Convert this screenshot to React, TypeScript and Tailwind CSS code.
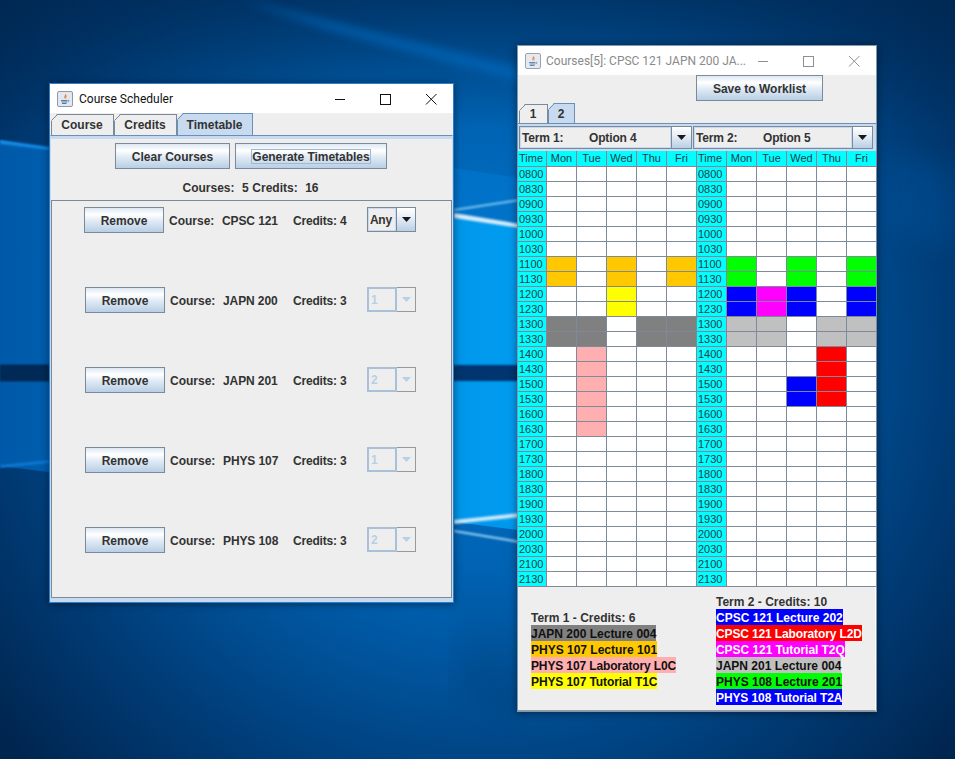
import React from "react";

const BTN =
  "flex items-center justify-center border border-[#7a8a99] bg-[linear-gradient(180deg,#dde8f3_0%,#ffffff_28%,#e4edf6_50%,#b8cfe5_100%)] pt-[1px] font-bold text-[12px] text-[#333]";

function Wallpaper() {
  return (
    <svg className="absolute inset-0" width="955" height="759" viewBox="0 0 955 759">
      <defs>
        <radialGradient id="base" gradientUnits="userSpaceOnUse" cx="480" cy="340" r="620">
          <stop offset="0" stopColor="#0078d0" />
          <stop offset="0.45" stopColor="#005dab" />
          <stop offset="0.75" stopColor="#003d78" />
          <stop offset="1" stopColor="#00254f" />
        </radialGradient>
        <linearGradient id="pane" gradientUnits="userSpaceOnUse" x1="0" y1="0" x2="520" y2="0">
          <stop offset="0" stopColor="#0059a8" />
          <stop offset="0.5" stopColor="#0070c4" />
          <stop offset="0.9" stopColor="#0098ec" />
          <stop offset="1" stopColor="#009cf0" />
        </linearGradient>
        <linearGradient id="low" gradientUnits="userSpaceOnUse" x1="0" y1="520" x2="0" y2="759">
          <stop offset="0" stopColor="#0070c8" />
          <stop offset="1" stopColor="#003264" />
        </linearGradient>
        <linearGradient id="top" gradientUnits="userSpaceOnUse" x1="0" y1="0" x2="0" y2="130">
          <stop offset="0" stopColor="#00264f" stopOpacity="0.6" />
          <stop offset="1" stopColor="#00264f" stopOpacity="0" />
        </linearGradient>
        <filter id="b1"><feGaussianBlur stdDeviation="0.8" /></filter>
        <filter id="b2"><feGaussianBlur stdDeviation="14" /></filter>
        <filter id="b3"><feGaussianBlur stdDeviation="5" /></filter>
      </defs>
      <rect width="955" height="759" fill="url(#base)" />
      <rect width="955" height="130" fill="url(#top)" />
      <polygon points="240,0 520,68 520,82 330,30" fill="#0068bc" opacity="0.75" filter="url(#b3)" />
      <polygon points="200,130 520,178 520,226 200,173" fill="#0078d0" opacity="0.6" />
      <polygon points="0,140 520,226 600,540 0,466" fill="url(#pane)" />
      <polygon points="455,540 520,545 520,720 455,690" fill="url(#low)" opacity="0.6" filter="url(#b2)" />
      <rect x="0" y="365" width="530" height="16" fill="#00366f" filter="url(#b1)" />
      <rect x="0" y="365" width="60" height="16" fill="#002a55" filter="url(#b1)" />
      <polygon points="454,213 520,224 520,228 454,218" fill="#d6ecfa" filter="url(#b1)" />
      <polygon points="454,209 520,199 520,201 454,211" fill="#7cc8f2" filter="url(#b1)" />
      <polygon points="454,520 520,513 520,517 454,524" fill="#cdeafa" filter="url(#b1)" />
      <polygon points="454,530 520,541 520,543 454,532" fill="#9fd6f6" filter="url(#b1)" />
      <polygon points="0,140 50,147 50,150 0,144" fill="#1388e4" filter="url(#b1)" />
      <polygon points="0,465 50,460 50,463 0,468" fill="#0b78d2" filter="url(#b1)" />
      <polygon points="877,150 955,170 955,250 877,230" fill="#004f96" opacity="0.5" filter="url(#b2)" />
    </svg>
  );
}

function JavaIcon({ faded }: { faded?: boolean }) {
  return (
    <svg width="16" height="16" viewBox="0 0 16 16" className={faded ? "shrink-0 opacity-90" : "shrink-0"}>
      <rect x="0.5" y="0.5" width="15" height="15" rx="1.5" fill="#e4e8ee" stroke="#8d99a8" />
      <path d="M8.5 2c1 1.5-2 3-1 5 .3.6.6 1 .9 1.3C7.200 6.500 10.500 5.500 8.500 2z" fill="#e8782a" />
      <path d="M10 4.500c-1 .8-1.600 1.500-1 3.200" stroke="#e8782a" strokeWidth="0.8" fill="none" />
      <path d="M4 9.500h6.500M4.500 11h5.500M5 12.500h4.500" stroke="#3f6fa8" strokeWidth="0.9" fill="none" />
      <path d="M11 9.300c1.500-.3 1.500 1.400-.5 1.500" stroke="#3f6fa8" strokeWidth="0.7" fill="none" />
    </svg>
  );
}

function Controls({ color, width }: { color: string; width: number }) {
  return (
    <svg width={width} height="12" viewBox={`0 0 ${width} 12`} className="shrink-0" shapeRendering="crispEdges">
      <rect x="0" y="6" width="10" height="1" fill={color} />
      <rect x="45.500" y="1.500" width="10" height="10" fill="none" stroke={color} />
      <path d="M91 1L101.500 11.500M101.500 1L91 11.500" stroke={color} strokeWidth="1" shapeRendering="auto" fill="none" />
    </svg>
  );
}

function Arrow({ disabled }: { disabled?: boolean }) {
  return (
    <svg width="9" height="5" viewBox="0 0 9 5">
      <polygon points="0,0 9,0 4.500,5" fill={disabled ? "#b8cfe5" : "#1a1a1a"} />
    </svg>
  );
}

function Tab({ label, cls, selected }: { label: string; cls: string; selected?: boolean }) {
  const color = selected ? "#6c8fb8" : "#7a8a99";
  return (
    <div
      className={`${cls} relative flex items-center justify-center border-t border-r [clip-path:polygon(6px_0,100%_0,100%_100%,0_100%,0_6px)] ${
        selected ? "border-[#6c8fb8] bg-[#c8daef]" : "border-[#7a8a99]"
      }`}
    >
      <svg className="absolute left-0 top-[-1px]" width="7" height="7" viewBox="0 0 7 7">
        <path d="M0.500 6.500L6.500 0.500" stroke={color} strokeWidth="1" fill="none" />
      </svg>
      <div className="absolute bottom-0 left-0 top-[6px] w-[1px]" style={{ background: color }} />
      {label}
    </div>
  );
}

function SmallCombo({ value, disabled }: { value: string; disabled?: boolean }) {
  return (
    <div className="flex h-[25px] w-[49px]">
      <div
        className={
          disabled
            ? "flex w-[30px] items-center border-2 border-[#a9c0d8] bg-[#eeeeee] pl-[2px] pt-[1px] text-[12px] font-bold text-[#b8cfe5]"
            : "flex w-[30px] items-center border border-[#7a8a99] bg-[#eeeeee] pl-[2px] pt-[1px] text-[12px] font-bold text-[#333] tracking-[-0.3px] shadow-[inset_0_0_0_1px_#c8daef]"
        }
      >
        {value}
      </div>
      <div
        className={
          disabled
            ? "flex w-[19px] items-center justify-center border border-l-0 border-[#999999] bg-[#eeeeee]"
            : "flex w-[19px] items-center justify-center border border-l-0 border-[#7a8a99] bg-[linear-gradient(180deg,#ffffff_0%,#e4edf6_45%,#b8cfe5_100%)]"
        }
      >
        <Arrow disabled={disabled} />
      </div>
    </div>
  );
}

const ROWS = [
  { name: "CPSC 121", cr: 4, combo: "Any", on: true, ml: "ml-[32px]", nw: "w-[71px]" },
  { name: "JAPN 200", cr: 3, combo: "1", on: false, ml: "ml-[33px]", nw: "w-[70px]" },
  { name: "JAPN 201", cr: 3, combo: "2", on: false, ml: "ml-[33px]", nw: "w-[70px]" },
  { name: "PHYS 107", cr: 3, combo: "1", on: false, ml: "ml-[33px]", nw: "w-[70px]" },
  { name: "PHYS 108", cr: 3, combo: "2", on: false, ml: "ml-[33px]", nw: "w-[70px]" },
];

function SchedulerWindow() {
  return (
    <div className="absolute left-[49px] top-[83px] flex h-[520px] w-[405px] flex-col border border-[#2a7fcb] bg-[#eeeeee] shadow-[0_1px_8px_rgba(0,0,0,0.45)]">
      <div className="flex h-[29px] shrink-0 items-center bg-white pl-[7px] pr-[16px] text-[12px] text-[#111] font-['Roboto',sans-serif]">
        <JavaIcon />
        <span className="ml-[6px]">Course Scheduler</span>
        <div className="ml-auto">
          <Controls color="#111" width={102} />
        </div>
      </div>
      <div className="flex h-[22px] shrink-0 items-end pl-[1px] text-[12px] font-bold text-[#333]">
        <Tab label="Course" cls="h-[21px] w-[63px]" />
        <Tab label="Credits" cls="h-[21px] w-[63px]" />
        <Tab label="Timetable" cls="h-[22px] w-[76px]" selected />
      </div>
      <div className="flex min-h-0 flex-1 flex-col border-t border-[#6c8fb8] border-x border-x-[#c8daef] border-b-[4px] border-b-[#c8daef]">
        <div className="flex min-h-0 flex-1 flex-col border-t-[3px] border-[#c8daef]">
          <div className="mt-[4px] flex shrink-0 justify-center gap-[5px] pr-[1px]">
            <div className={`${BTN} h-[26px] w-[115px]`}>Clear Courses</div>
            <div className={`${BTN} h-[26px] w-[152px]`}>
              <span className="flex h-[15px] items-center border border-[#a3b8cc] tracking-[-0.03px]">Generate Timetables</span>
            </div>
          </div>
          <div className="flex h-[31px] shrink-0 items-center justify-center whitespace-pre pr-[2px] pt-[6px] text-[12px] font-bold text-[#333] [word-spacing:0.4px]">
            Courses:{"  "}5 Credits:{"  "}16
          </div>
          <div className="min-h-0 flex-1 border border-[#7a8a99]">
            {ROWS.map((r) => (
              <div key={r.name} className="flex h-[80px] items-start pt-[6px] text-[12px] font-bold text-[#333]">
                <div className={`${BTN} ${r.ml} h-[26px] w-[80px] shrink-0`}>Remove</div>
                <div className="ml-[5px] flex h-[26px] w-[53px] shrink-0 items-center pt-[1px]">Course:</div>
                <div className={`${r.nw} flex h-[26px] shrink-0 items-center pt-[1px] tracking-[-0.1px]`}>{r.name}</div>
                <div className="flex h-[26px] w-[74px] shrink-0 items-center pt-[1px] tracking-[-0.2px]">Credits: {r.cr}</div>
                <SmallCombo value={r.combo} disabled={!r.on} />
              </div>
            ))}
          </div>
        </div>
      </div>
    </div>
  );
}

function TermCombo({ term, option, fieldW, optW }: { term: string; option: string; fieldW: string; optW: string }) {
  return (
    <div className="flex h-[23px] shrink-0">
      <div className={`${fieldW} flex items-center whitespace-pre border border-[#7a8a99] bg-[#eeeeee] pl-[2px] text-[12px] font-bold text-[#333] tracking-[-0.15px] shadow-[inset_0_0_0_1px_#c8daef]`}>
        <span className={optW}>{term}</span>
        <span>{option}</span>
      </div>
      <div className="flex w-[20px] items-center justify-center border border-l-0 border-[#7a8a99] bg-[linear-gradient(180deg,#ffffff_0%,#e4edf6_45%,#b8cfe5_100%)]">
        <Arrow />
      </div>
    </div>
  );
}

const TIMES = [
  "0800","0830","0900","0930","1000","1030","1100","1130","1200","1230","1300","1330","1400","1430",
  "1500","1530","1600","1630","1700","1730","1800","1830","1900","1930","2000","2030","2100","2130",
];
const DAYS = ["Mon", "Tue", "Wed", "Thu", "Fri"];

const O = "bg-[#ffc800]";
const Y = "bg-[#ffff00]";
const G = "bg-[#808080]";
const P = "bg-[#ffafaf]";
const L = "bg-[#00ff00]";
const B = "bg-[#0000ff]";
const M = "bg-[#ff00ff]";
const S = "bg-[#c0c0c0]";
const R = "bg-[#ff0000]";

function term1(t: string, d: number): string {
  if ((t === "1100" || t === "1130") && (d === 0 || d === 2 || d === 4)) return O;
  if ((t === "1200" || t === "1230") && d === 2) return Y;
  if ((t === "1300" || t === "1330") && d !== 2) return G;
  if (d === 1 && t >= "1400" && t <= "1630") return P;
  return "bg-white";
}
function term2(t: string, d: number): string {
  if ((t === "1100" || t === "1130") && (d === 0 || d === 2 || d === 4)) return L;
  if ((t === "1200" || t === "1230") && (d === 0 || d === 2 || d === 4)) return B;
  if ((t === "1200" || t === "1230") && d === 1) return M;
  if ((t === "1300" || t === "1330") && d !== 2) return S;
  if (d === 3 && t >= "1400" && t <= "1530") return R;
  if (d === 2 && (t === "1500" || t === "1530")) return B;
  return "bg-white";
}

const CY = "overflow-hidden border-b border-r border-[#937f95] bg-[#00ffff] text-[11px] leading-[15px] text-[#2a3a4a]";
const CELL = "h-[15px] border-b border-r border-[#7d8a99]";

function Timetable() {
  const heads = ["Time", ...DAYS, "Time", ...DAYS];
  return (
    <div className="grid h-[436px] w-[359px] shrink-0 grid-cols-[29px_repeat(11,30px)] grid-rows-[16px_repeat(28,15px)]">
      {heads.map((h, i) => (
        <div key={i} className={`${CY} h-[16px] ${h === "Time" ? "pl-[1px]" : "text-center"}`}>
          {h}
        </div>
      ))}
      {TIMES.map((t) => (
        <React.Fragment key={t}>
          <div className={`${CY} h-[15px] pl-[1px]`}>{t}</div>
          {DAYS.map((d, i) => (
            <div key={d} className={`${CELL} ${term1(t, i)}`} />
          ))}
          <div className={`${CY} h-[15px] pl-[1px]`}>{t}</div>
          {DAYS.map((d, i) => (
            <div key={d} className={`${CELL} ${term2(t, i)}`} />
          ))}
        </React.Fragment>
      ))}
    </div>
  );
}

function LegendLine({ text, cls }: { text: string; cls: string }) {
  return <div className={`${cls} h-[16px] w-fit whitespace-nowrap text-[12px] font-bold leading-[18px]`}>{text}</div>;
}

function CoursesWindow() {
  return (
    <div className="absolute left-[517px] top-[45px] flex h-[667px] w-[360px] flex-col border border-[#7f98b0] bg-[#eeeeee] shadow-[0_1px_8px_rgba(0,0,0,0.45)]">
      <div className="flex h-[29px] shrink-0 items-center bg-white pl-[7px] pr-[16px] text-[12px] text-[#8a8a8a] font-['Roboto',sans-serif]">
        <JavaIcon faded />
        <span className="ml-[5px] whitespace-nowrap">Courses[5]: CPSC 121 JAPN 200 JA...</span>
        <div className="ml-auto">
          <Controls color="#8f8f8f" width={102} />
        </div>
      </div>
      <div className={`${BTN} ml-[178px] h-[26px] w-[127px] shrink-0`}>Save to Worklist</div>
      <div className="mt-[2px] flex h-[20px] shrink-0 items-end pl-[1px] text-[12px] font-bold text-[#333]">
        <Tab label="1" cls="h-[19px] w-[29px]" />
        <Tab label="2" cls="h-[20px] w-[27px]" selected />
      </div>
      <div className="flex h-[28px] shrink-0 gap-[1px] border-t border-[#6c8fb8] bg-[#c8daef] pl-[1px] pt-[2px]">
        <TermCombo term="Term 1:" option="Option 4" fieldW="w-[153px]" optW="w-[67px]" />
        <TermCombo term="Term 2:" option="Option 5" fieldW="w-[160px]" optW="w-[67px]" />
      </div>
      <Timetable />
      <div className="flex min-h-0 flex-1 items-center border-b border-r border-b-[#9a9a9a] border-r-white pt-[1px]">
        <div className="w-[198px] shrink-0 pl-[13px]">
          <LegendLine text="Term 1 - Credits: 6" cls="text-[#333]" />
          <LegendLine text="JAPN 200 Lecture 004" cls="bg-[#808080] text-[#111]" />
          <LegendLine text="PHYS 107 Lecture 101" cls="bg-[#ffc800] text-[#111]" />
          <LegendLine text="PHYS 107 Laboratory L0C" cls="bg-[#ffafaf] text-[#111] tracking-[-0.13px]" />
          <LegendLine text="PHYS 107 Tutorial T1C" cls="bg-[#ffff00] text-[#111] tracking-[-0.1px]" />
        </div>
        <div>
          <LegendLine text="Term 2 - Credits: 10" cls="text-[#333]" />
          <LegendLine text="CPSC 121 Lecture 202" cls="bg-[#0000ff] text-white" />
          <LegendLine text="CPSC 121 Laboratory L2D" cls="bg-[#ff0000] text-white tracking-[-0.13px]" />
          <LegendLine text="CPSC 121 Tutorial T2Q" cls="bg-[#ff00ff] text-white tracking-[-0.05px]" />
          <LegendLine text="JAPN 201 Lecture 004" cls="bg-[#c0c0c0] text-[#111]" />
          <LegendLine text="PHYS 108 Lecture 201" cls="bg-[#00ff00] text-[#111]" />
          <LegendLine text="PHYS 108 Tutorial T2A" cls="bg-[#0000ff] text-white tracking-[-0.1px]" />
        </div>
      </div>
    </div>
  );
}

export default function App() {
  return (
    <div className="relative h-[759px] w-[955px] overflow-hidden bg-[#00478c] font-['Liberation_Sans',sans-serif]">
      <Wallpaper />
      <SchedulerWindow />
      <CoursesWindow />
    </div>
  );
}
